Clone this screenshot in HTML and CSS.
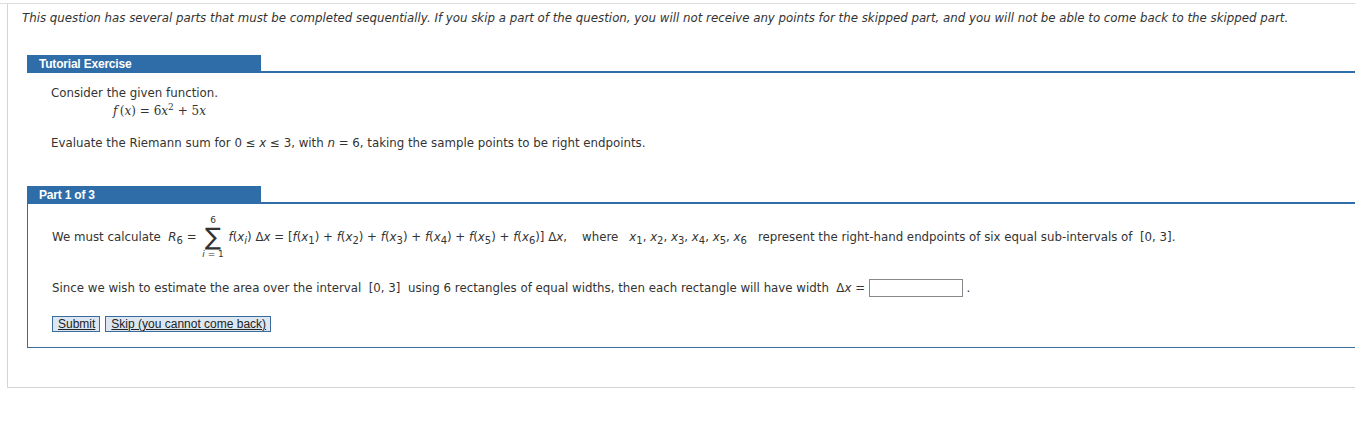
FILE: index.html
```html
<!DOCTYPE html>
<html lang="en">
<head>
    <meta charset="UTF-8">
    <meta name="viewport" content="width=device-width, initial-scale=1.0">
    <title>Tutorial Exercise</title>
    <link rel="stylesheet" href="styles.css">
</head>
<body>
<div class="frame">
    <div class="question">
        <p class="notice">This question has several parts that must be completed sequentially. If you skip a part of the question, you will not receive any points for the skipped part, and you will not be able to come back to the skipped part.</p>

        <div class="section">
            <div class="section-title">
                <span class="tab">Tutorial Exercise</span>
                <span class="rule"></span>
            </div>
            <div class="section-body">
                <p>Consider the given function.</p>
                <p class="math-line"><span class="math"><i>f</i>&thinsp;(<i>x</i>) = 6<i>x</i><sup>2</sup> + 5<i>x</i></span></p>
                <p class="gap">Evaluate the Riemann sum for 0 &le; <i>x</i> &le; 3, with <i>n</i> = 6, taking the sample points to be right endpoints.</p>
            </div>
        </div>

        <div class="section part">
            <div class="section-title">
                <span class="tab">Part 1 of 3</span>
                <span class="rule"></span>
            </div>
            <div class="section-body boxed">
                <p class="sum-line">We must calculate&nbsp; <i>R</i><sub>6</sub> = <span class="sigma"><span class="lim">6</span><span class="big">&sum;</span><span class="lim"><i>i</i> = 1</span></span> <i>f</i>(<i>x<sub>i</sub></i>) &Delta;<i>x</i> = [<i>f</i>(<i>x</i><sub>1</sub>) + <i>f</i>(<i>x</i><sub>2</sub>) + <i>f</i>(<i>x</i><sub>3</sub>) + <i>f</i>(<i>x</i><sub>4</sub>) + <i>f</i>(<i>x</i><sub>5</sub>) + <i>f</i>(<i>x</i><sub>6</sub>)] &Delta;<i>x</i>,<span class="sp-wide"></span>where<span class="sp-mid"></span><i>x</i><sub>1</sub>, <i>x</i><sub>2</sub>, <i>x</i><sub>3</sub>, <i>x</i><sub>4</sub>, <i>x</i><sub>5</sub>, <i>x</i><sub>6</sub><span class="sp-mid"></span>represent the right-hand endpoints of six equal sub-intervals of&nbsp; [0, 3].</p>
                <p class="width-line">Since we wish to estimate the area over the interval&nbsp; [0, 3]&nbsp; using 6 rectangles of equal widths, then each rectangle will have width&nbsp; &Delta;<i>x</i> = <input type="text" class="answer"> .</p>
                <div class="actions">
                    <button class="btn">Submit</button>
                    <button class="btn">Skip (you cannot come back)</button>
                </div>
            </div>
        </div>
    </div>
</div>
</body>
</html>
```

FILE: styles.css
```css
html, body {
    overflow: hidden;
}
body {
    margin: 0;
    font-family: "DejaVu Sans", Verdana, sans-serif;
    font-size: 11.8px;
    color: #333;
    background: #fff;
}
p {
    margin: 0;
}
.frame {
    margin-top: 3px;
    border-top: 1px solid #ddd;
}
.question {
    margin-left: 7px;
    margin-right: -30px;
    border-left: 1px solid #d4d4d4;
    border-bottom: 1px solid #d4d4d4;
    padding: 7px 0 39px 0;
}
.notice {
    font-style: italic;
    font-size: 11.8px;
    padding-left: 14px;
    line-height: 14px;
}
.section {
    margin-left: 19px;
    margin-top: 30px;
}
.section-title {
    display: flex;
    align-items: flex-end;
}
.tab {
    width: 222px;
    height: 18px;
    line-height: 18px;
    padding-left: 12px;
    background: #2e6da8;
    color: #fff;
    font-family: "Liberation Sans", Arial, sans-serif;
    font-weight: bold;
    font-size: 12px;
    letter-spacing: -0.2px;
}
.rule {
    flex: 1;
    border-bottom: 2px solid #2e6da8;
}
.section-body {
    padding: 12px 0 0 24px;
    line-height: 16px;
}
.math-line {
    padding: 2px 0 0 62px;
}
.math {
    font-family: "DejaVu Serif", "Liberation Serif", serif;
    font-size: 12px;
}
.math sup {
    font-size: 9px;
    line-height: 0;
}
.gap {
    margin-top: 16px;
}
.part {
    margin-top: 35px;
}
.boxed {
    border-left: 1px solid #3b6b9b;
    border-bottom: 1px solid #3b6b9b;
    padding: 12px 0 15px 24px;
}
.sum-line {
    line-height: 43px;
    height: 43px;
}
.sum-line i, .width-line i {
    font-style: italic;
}
sub {
    font-size: 10px;
    line-height: 0;
    vertical-align: -3px;
}
.sigma {
    display: inline-flex;
    flex-direction: column;
    align-items: center;
    vertical-align: middle;
    margin: 0 1px 0 2px;
}
.lim {
    font-size: 9px;
    line-height: 9px;
}
.big {
    font-size: 24px;
    line-height: 25px;
}
.sp-wide {
    display: inline-block;
    width: 15px;
}
.sp-mid {
    display: inline-block;
    width: 11px;
}
.width-line {
    margin-top: 20px;
}
.answer {
    width: 88px;
    height: 14px;
    border: 1px solid #888;
    padding: 1px 2px;
    margin: 0;
    vertical-align: middle;
}
.actions {
    margin-top: 19px;
    display: flex;
    gap: 5px;
}
.btn {
    font-family: "Liberation Sans", Arial, sans-serif;
    font-size: 12px;
    color: #222;
    text-decoration: underline;
    background: #dde7f2;
    border: 1px solid #3b6b9b;
    padding: 0 4px 0 5px;
    height: 16px;
    line-height: 14px;
    margin: 0;
}
```
